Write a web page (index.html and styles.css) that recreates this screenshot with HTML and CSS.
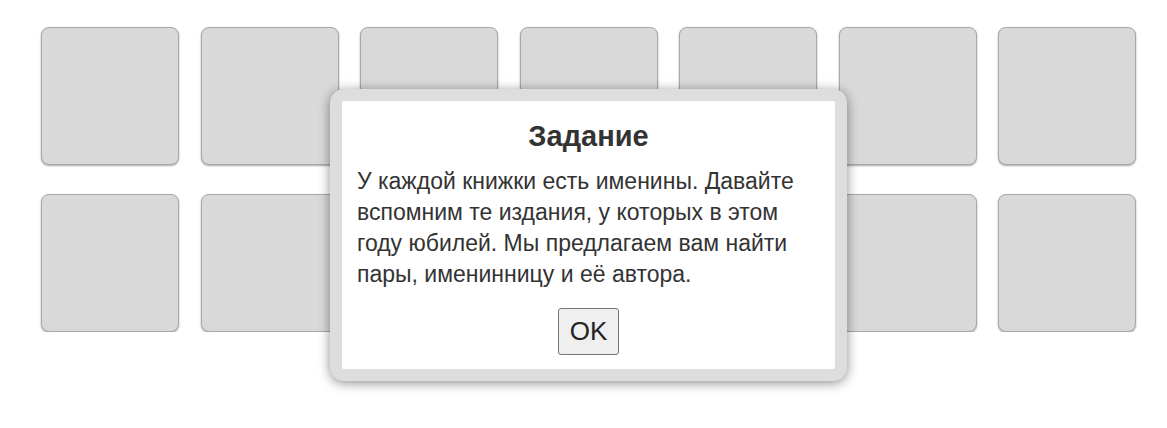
FILE: index.html
```
<!DOCTYPE html>
<html lang="ru">
<head>
<meta charset="utf-8">
<title>Задание</title>
<link rel="stylesheet" href="styles.css">
</head>
<body>
<div class="board">
  <div class="card"></div>
  <div class="card"></div>
  <div class="card"></div>
  <div class="card"></div>
  <div class="card"></div>
  <div class="card"></div>
  <div class="card"></div>
  <div class="card"></div>
  <div class="card"></div>
  <div class="card"></div>
  <div class="card"></div>
  <div class="card"></div>
  <div class="card"></div>
  <div class="card"></div>
</div>
<div class="dialog">
  <div class="dialog-inner">
    <h2 class="dialog-title">Задание</h2>
    <p class="dialog-text">У каждой книжки есть именины. Давайте вспомним те издания, у которых в этом году юбилей. Мы предлагаем вам найти пары, именинницу и её автора.</p>
    <div class="dialog-actions"><button class="ok-btn" type="button">OK</button></div>
  </div>
</div>
</body>
</html>
```
FILE: styles.css
```
html, body {
  margin: 0;
  padding: 0;
  background: #ffffff;
  font-family: "Liberation Sans", Arial, sans-serif;
  color: #333333;
}

.board {
  display: grid;
  grid-template-columns: repeat(7, 138px);
  column-gap: 21.5px;
  row-gap: 29px;
  padding: 27px 0 0 41px;
}

.card {
  box-sizing: border-box;
  width: 138px;
  height: 138px;
  background: #d9d9d9;
  border: 1px solid #a8a8a8;
  border-radius: 8px;
  box-shadow: 0 1px 2px rgba(0, 0, 0, 0.35);
}

.dialog {
  position: absolute;
  left: 330px;
  top: 89px;
  box-sizing: border-box;
  width: 517px;
  height: 292px;
  border: 12px solid #dddddd;
  border-radius: 14px;
  background: #ffffff;
  box-shadow: 0 2px 12px rgba(0, 0, 0, 0.45);
}

.dialog-inner {
  display: flex;
  flex-direction: column;
  padding: 18px 15px 0 15px;
}

.dialog-title {
  margin: 0;
  font-size: 29px;
  line-height: 34px;
  font-weight: bold;
  text-align: center;
  color: #333333;
}

.dialog-text {
  margin: 13px 0 0 0;
  font-size: 23px;
  line-height: 31px;
  color: #333333;
}

.dialog-actions {
  display: flex;
  justify-content: center;
  margin-top: 18px;
}

.ok-btn {
  box-sizing: border-box;
  width: 61px;
  height: 47px;
  padding: 0;
  font-family: "Liberation Sans", Arial, sans-serif;
  font-size: 26px;
  color: #222222;
  background: #efefef;
  border: 1px solid #767676;
  border-radius: 3px;
}
```
